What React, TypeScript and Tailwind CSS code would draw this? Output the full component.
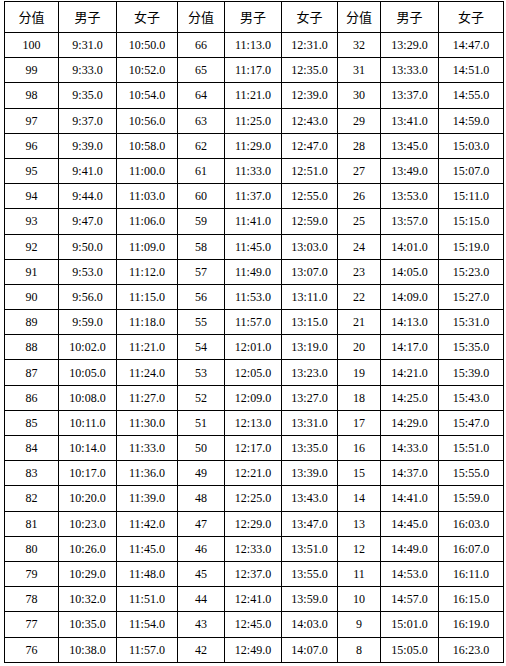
const fmt = (sec: number) =>
  `${Math.floor(sec / 60)}:${String(sec % 60).padStart(2, "0")}.0`;

// the first block does not step evenly, so it is written out
const block1Male = [
  "9:31.0", "9:33.0", "9:35.0", "9:37.0", "9:39.0", "9:41.0", "9:44.0", "9:47.0",
  "9:50.0", "9:53.0", "9:56.0", "9:59.0", "10:02.0", "10:05.0", "10:08.0", "10:11.0",
  "10:14.0", "10:17.0", "10:20.0", "10:23.0", "10:26.0", "10:29.0", "10:32.0",
  "10:35.0", "10:38.0",
];
const block1Female = [
  "10:50.0", "10:52.0", "10:54.0", "10:56.0", "10:58.0", "11:00.0", "11:03.0",
  "11:06.0", "11:09.0", "11:12.0", "11:15.0", "11:18.0", "11:21.0", "11:24.0",
  "11:27.0", "11:30.0", "11:33.0", "11:36.0", "11:39.0", "11:42.0", "11:45.0",
  "11:48.0", "11:51.0", "11:54.0", "11:57.0",
];

const rows = Array.from({ length: 25 }, (_, i) => [
  String(100 - i),
  block1Male[i],
  block1Female[i],
  String(66 - i),
  fmt(11 * 60 + 13 + i * 4),
  fmt(12 * 60 + 31 + i * 4),
  String(32 - i),
  fmt(13 * 60 + 29 + i * 4),
  fmt(14 * 60 + 47 + i * 4),
]);

const widths = [
  "w-[54px]", "w-[58px]", "w-[61px]", "w-[47px]", "w-[57px]",
  "w-[56px]", "w-[43px]", "w-[58px]", "w-[65px]",
];

const header = ["分值", "男子", "女子", "分值", "男子", "女子", "分值", "男子", "女子"];

export default function App() {
  return (
    <div className="w-[506px] h-[666px] bg-white pt-[1px] pl-[4px]">
      <table className="table-fixed border-collapse w-[500px] text-black">
        <colgroup>
          {widths.map((w, i) => (
            <col key={i} className={w} />
          ))}
        </colgroup>
        <thead>
          <tr className="h-[31px]">
            {header.map((h, i) => (
              <th
                key={i}
                className="border border-black font-normal text-[13px] text-center p-0 font-[family-name:'Noto_Sans_CJK_SC',sans-serif]"
              >
                {h}
              </th>
            ))}
          </tr>
        </thead>
        <tbody>
          {rows.map((r, i) => (
            <tr key={i} className="h-[25.2px]">
              {r.map((c, j) => (
                <td
                  key={j}
                  className="border border-black text-[12px] text-center p-0 leading-none font-[family-name:'Liberation_Serif','DejaVu_Serif',serif]"
                >
                  {c}
                </td>
              ))}
            </tr>
          ))}
        </tbody>
      </table>
    </div>
  );
}
